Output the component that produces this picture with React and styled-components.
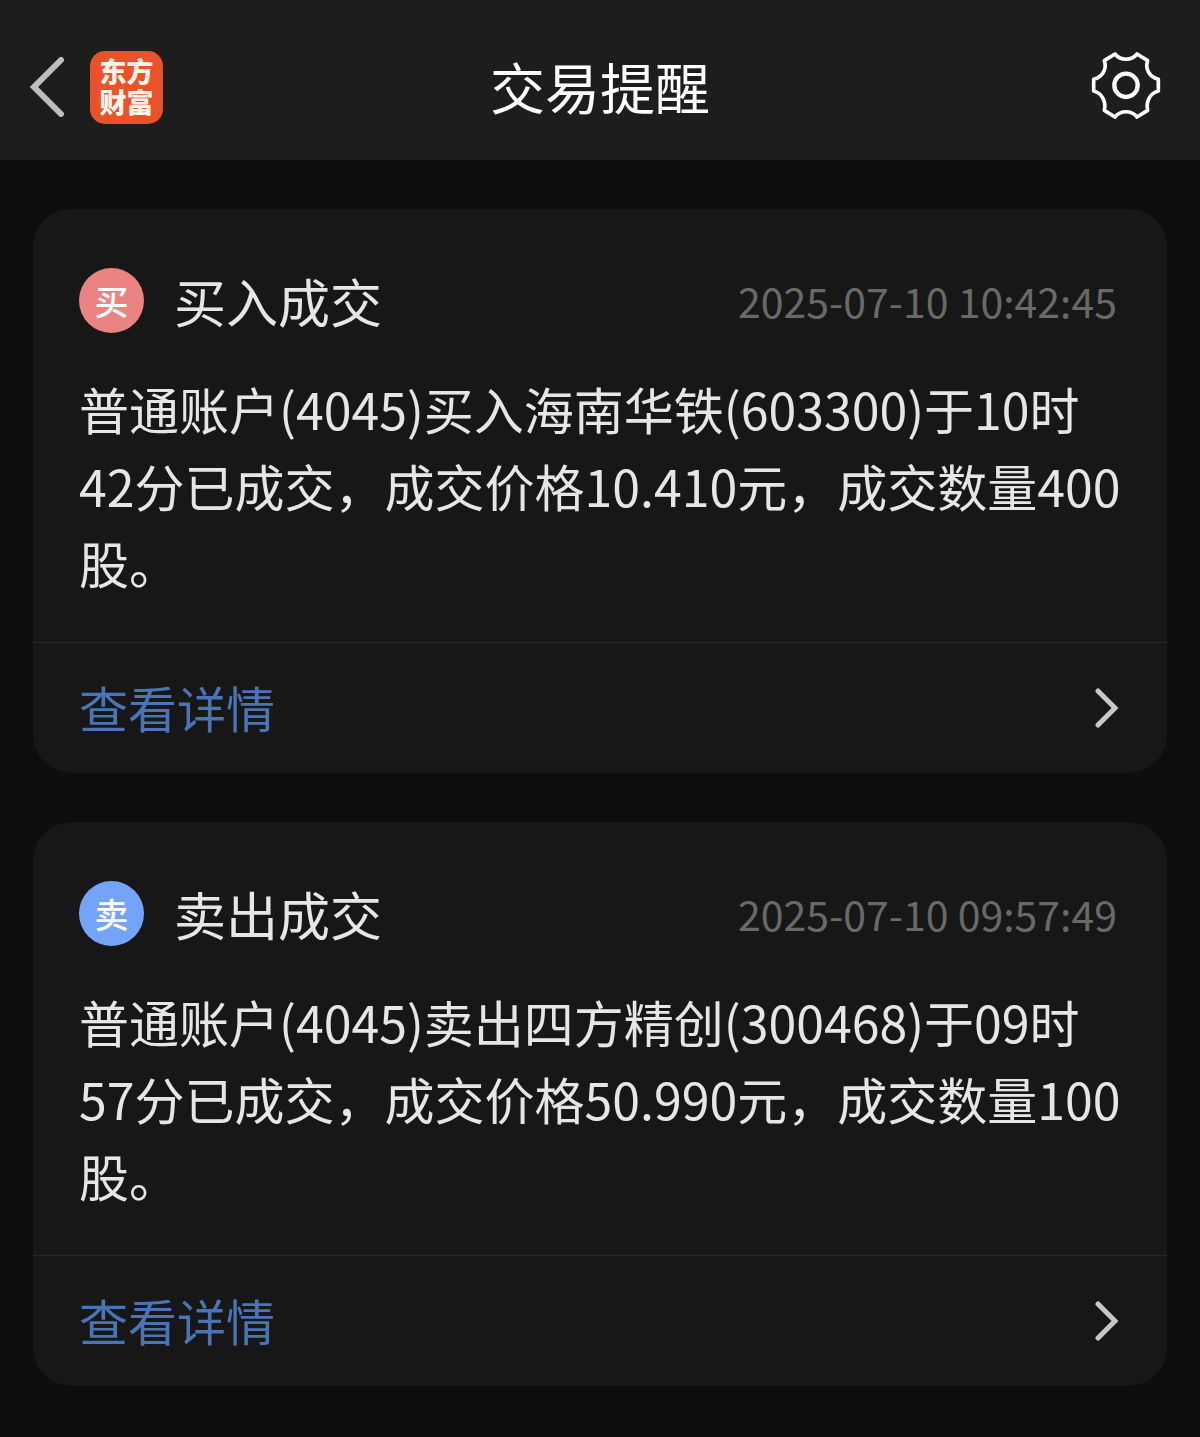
import React from "react";
import styled, { createGlobalStyle } from "styled-components";

const GlobalStyle = createGlobalStyle`
  * {
    box-sizing: border-box;
  }

  body {
    margin: 0;
    background-color: #0d0d0d;
    font-family: "Noto Sans CJK SC", "Noto Sans", sans-serif;
  }

  button {
    padding: 0;
    border: none;
    background: none;
    font-family: inherit;
    cursor: pointer;
  }

  svg {
    display: block;
  }
`

const Page = styled.div`
  min-height: 100vh;
`

const Header = styled.header`
  display: grid;
  grid-template-columns: 1fr auto 1fr;
  align-items: center;
  height: 160px;
  padding: 14px 29px 0;
  background-color: #1d1d1d;
`

const HeaderLeft = styled.div`
  display: flex;
  align-items: center;
  gap: 25px;
`

const Logo = styled.span`
  width: 73px;
  height: 73px;
  padding-top: 4px;
  border-radius: 15px;
  background-color: #ea5329;
  color: #fff4ea;
  font-size: 27px;
  font-weight: 900;
  line-height: 31px;
  text-align: center;
`

const Title = styled.h1`
  margin: 0;
  padding-bottom: 4px;
  color: #ffffff;
  font-size: 55px;
  font-weight: 400;
  line-height: 80px;
`

const SettingsButton = styled.button`
  justify-self: end;
  margin-right: 10px;
`

const List = styled.main`
  display: flex;
  flex-direction: column;
  gap: 49px;
  padding: 49px 33px;
`

const Card = styled.article`
  border-radius: 38px;
  background-color: #171717;
`

const CardBody = styled.div`
  padding: 46px 46px 41px;
`

const CardHead = styled.div`
  display: flex;
  align-items: center;
  height: 91px;
  margin-bottom: 24px;
  padding-right: 4px;
`

const Badge = styled.span`
  display: flex;
  align-items: center;
  justify-content: center;
  width: 65px;
  height: 65px;
  margin-right: 30px;
  border-radius: 50%;
  background-color: ${(props) => props.$color};
  color: #ffffff;
  font-size: 34px;
  font-weight: 500;
  line-height: 65px;
`

const CardTitle = styled.h2`
  margin: 0;
  color: #e6e6e6;
  font-size: 52px;
  font-weight: 400;
  line-height: 91px;
`

const Time = styled.time`
  margin-left: auto;
  color: #696969;
  font-size: 41px;
  line-height: 91px;
`

const Message = styled.p`
  margin: 0;
  color: #e6e6e6;
  font-size: 50px;
  line-height: 77px;
`

const DetailLink = styled.a`
  display: flex;
  align-items: center;
  justify-content: space-between;
  height: 131px;
  padding: 0 46px;
  border-top: 1px solid #292929;
  color: #4a74b5;
  font-size: 49px;
  text-decoration: none;
`

const DetailLabel = styled.span`
  padding-bottom: 4px;
`

const notices = [
    {
        mark: "买",
        color: "#eb8382",
        title: "买入成交",
        time: "2025-07-10 10:42:45",
        text: "普通账户(4045)买入海南华铁(603300)于10时42分已成交，成交价格10.410元，成交数量400股。",
    },
    {
        mark: "卖",
        color: "#74a4f8",
        title: "卖出成交",
        time: "2025-07-10 09:57:49",
        text: "普通账户(4045)卖出四方精创(300468)于09时57分已成交，成交价格50.990元，成交数量100股。",
    },
]

function BackIcon() {
    return (
        <svg width="36" height="60" viewBox="0 0 36 60" fill="none" stroke="#bdbdbd" strokeWidth="6" strokeLinecap="round">
            <path d="M32 3 5 30 32 57"/>
        </svg>
    )
}

function GearIcon() {
    return (
        <svg width="70" height="70" viewBox="65 66 210 210" fill="none" stroke="#ffffff" strokeWidth="11" strokeLinejoin="round" overflow="visible">
            <path d="M137 72C154 93 186 93 203 72L235 92C226 118 242 142 267 148V183C242 190 229 213 235 241L203 261C186 240 154 240 137 261L105 241C111 213 98 190 73 183V148C98 142 114 118 105 92Z"/>
            <circle cx="170" cy="166" r="35" strokeWidth="13"/>
        </svg>
    )
}

function ArrowIcon() {
    return (
        <svg width="26" height="40" viewBox="0 0 26 40" fill="none" stroke="#c8c8c8" strokeWidth="5" strokeLinecap="round">
            <path d="M3 3 20 20 3 37"/>
        </svg>
    )
}

export default function App() {
    return (
        <Page>
            <GlobalStyle/>
            <Header>
                <HeaderLeft>
                    <button type="button" aria-label="返回">
                        <BackIcon/>
                    </button>
                    <Logo>东方<br/>财富</Logo>
                </HeaderLeft>
                <Title>交易提醒</Title>
                <SettingsButton type="button" aria-label="设置">
                    <GearIcon/>
                </SettingsButton>
            </Header>
            <List>
                {notices.map((notice) => (
                    <Card key={notice.time}>
                        <CardBody>
                            <CardHead>
                                <Badge $color={notice.color}>{notice.mark}</Badge>
                                <CardTitle>{notice.title}</CardTitle>
                                <Time>{notice.time}</Time>
                            </CardHead>
                            <Message>{notice.text}</Message>
                        </CardBody>
                        <DetailLink href="#">
                            <DetailLabel>查看详情</DetailLabel>
                            <ArrowIcon/>
                        </DetailLink>
                    </Card>
                ))}
            </List>
        </Page>
    )
}
